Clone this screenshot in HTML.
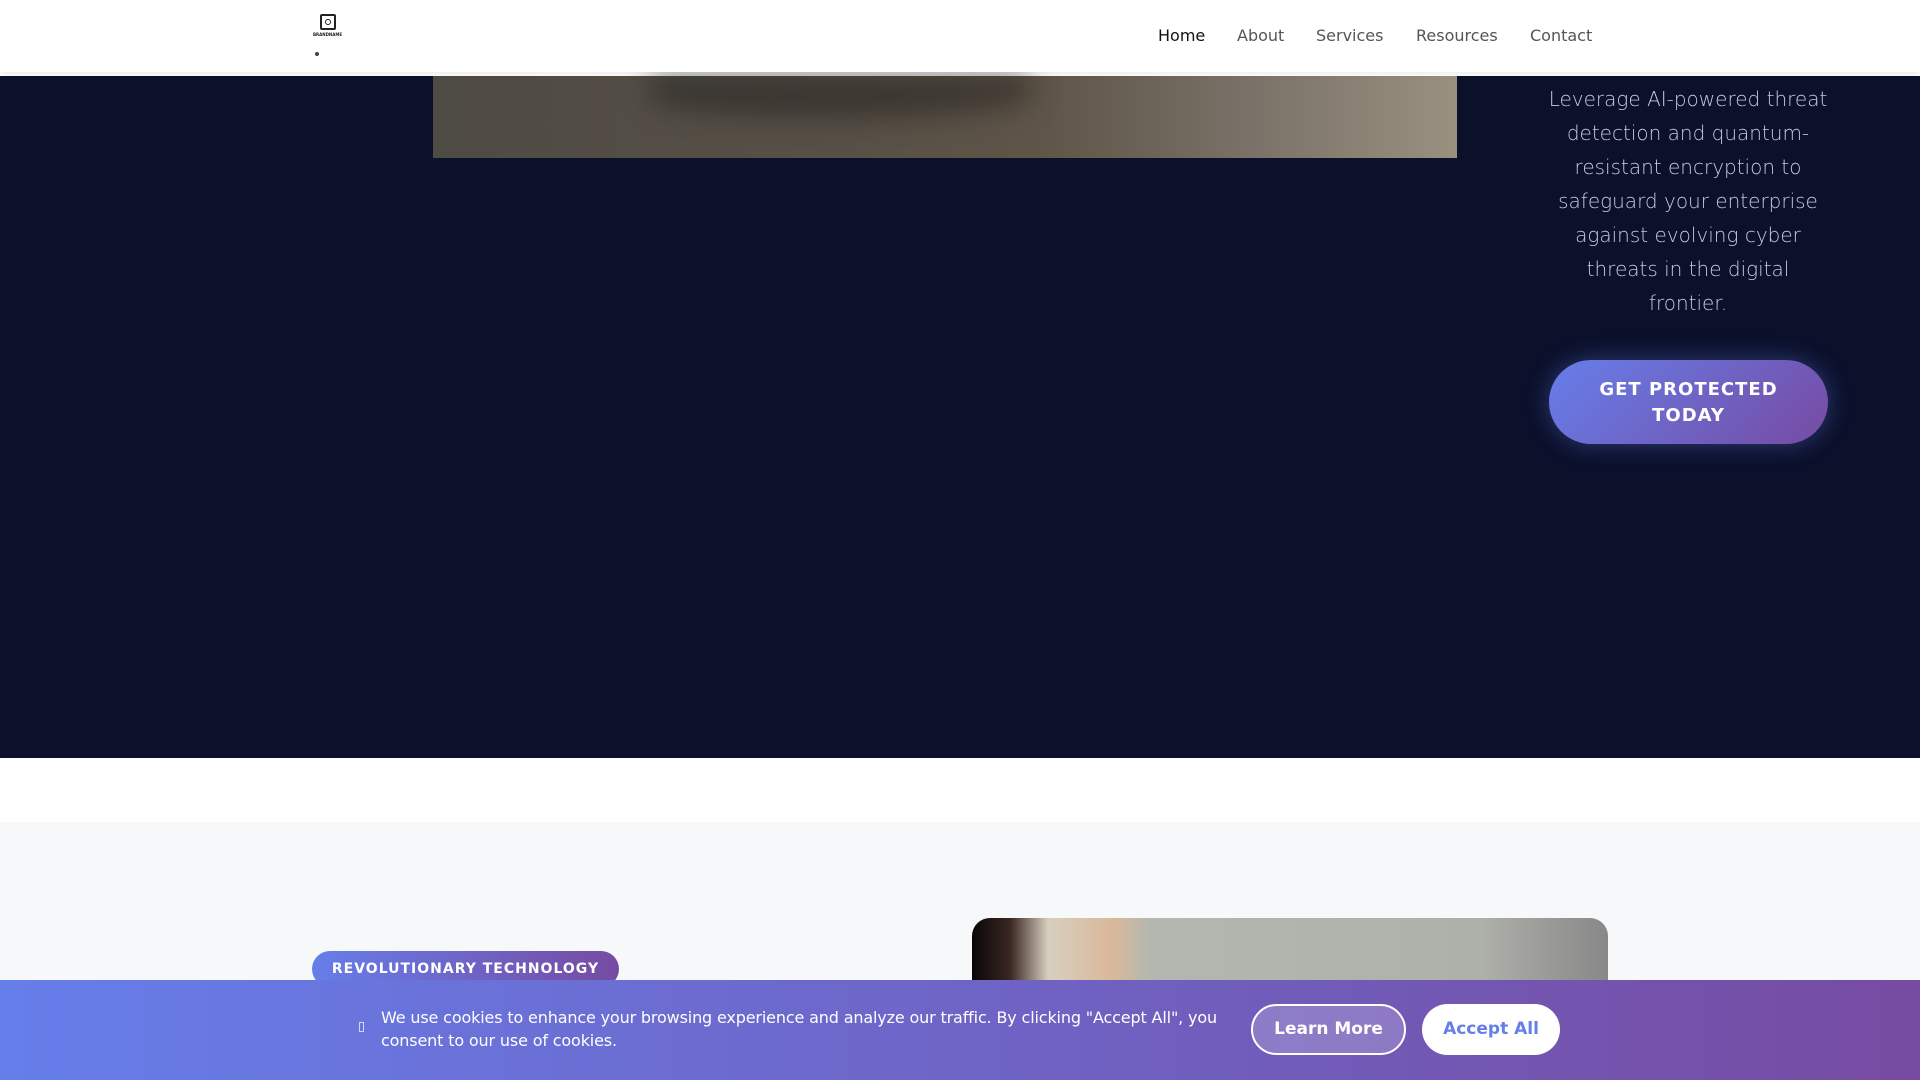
<!DOCTYPE html>
<html><head><meta charset="utf-8"><style>
*{margin:0;padding:0;box-sizing:border-box}
html,body{width:1920px;height:1080px;overflow:hidden}
body{font-family:"DejaVu Sans","Liberation Sans",sans-serif;background:#fff;position:relative}
.nav{position:absolute;top:0;left:0;width:1920px;height:72px;background:#fff;box-shadow:0 2px 6px rgba(0,0,0,.08);z-index:5}
.nav a{position:absolute;top:26px;font-size:16px;color:#555;text-decoration:none}
.dark{position:absolute;top:76px;left:0;width:1920px;height:682px;background:#0b102b}
.img1{position:absolute;left:433px;top:76px;width:1024px;height:82px;background:linear-gradient(90deg,#4e4a44 0%,#575046 40%,#5f5548 60%,#7a7268 80%,#9a9080 100%)}
.blob{position:absolute;left:650px;top:76px;width:380px;height:40px;border-radius:0 0 50% 50%;background:rgba(35,33,32,.6);filter:blur(14px)}
.txt{position:absolute;left:1548px;width:280px;top:82px;text-align:center;color:#c8cad8;font-size:20px;line-height:34px;font-weight:300}
.btn{position:absolute;left:1549px;top:360px;width:279px;height:84px;border-radius:42px;background:linear-gradient(135deg,#667eea,#764ba2);color:#fff;font-weight:bold;font-size:18px;letter-spacing:1px;text-align:center;line-height:26px;padding-top:17px;box-shadow:0 0 24px rgba(102,126,234,.4)}
.light{position:absolute;top:822px;left:0;width:1920px;height:258px;background:#f7f8fa}
.badge{position:absolute;left:312px;top:951px;width:307px;height:36px;border-radius:18px;background:linear-gradient(90deg,#667eea,#764ba2);color:#fff;font-weight:bold;font-size:14px;letter-spacing:1px;text-align:center;line-height:36px}
.img2{position:absolute;left:972px;top:918px;width:636px;height:162px;border-radius:18px 18px 0 0;overflow:hidden;background:linear-gradient(90deg,#0a0606 0%,#3a2622 6%,#d8cfc0 12%,#d9b89a 22%,#b4b7b0 28%,#aeb0aa 80%,#888 100%)}
.cookie{position:absolute;top:980px;left:0;width:1920px;height:100px;background:linear-gradient(90deg,#667eea,#764ba2);z-index:6}
.ct{position:absolute;left:381px;top:26px;color:#fff;font-size:16px;line-height:23px;width:860px;letter-spacing:-0.15px}
.lm{position:absolute;left:1251px;top:24px;width:155px;height:51px;border:2px solid #fff;border-radius:26px;background:rgba(255,255,255,.2);color:#fff;font-weight:bold;font-size:17px;text-align:center;line-height:47px}
.aa{position:absolute;left:1422px;top:24px;width:138px;height:51px;border-radius:26px;background:#fff;color:#667eea;font-weight:bold;font-size:17px;text-align:center;line-height:51px}
</style></head><body>
<div class="nav">
<div style="position:absolute;left:320px;top:14px;width:16px;height:16px;border:2px solid #222;border-radius:2px"><div style="margin:3px;width:6px;height:6px;border:1.5px solid #222;border-radius:50%"></div></div>
<div style="position:absolute;left:313px;top:32px;font-size:4px;color:#222;font-weight:bold">BRANDNAME</div>
<div style="position:absolute;left:315px;top:52px;width:4px;height:4px;border-radius:50%;background:#444"></div>
<a style="left:1158px;color:#111">Home</a><a style="left:1237px">About</a><a style="left:1316px">Services</a><a style="left:1416px">Resources</a><a style="left:1530px">Contact</a>
</div>
<div class="dark"></div>
<div class="img1"></div><div class="blob"></div>
<div class="txt">Leverage AI-powered threat detection and quantum-resistant encryption to safeguard your enterprise against evolving cyber threats in the digital frontier.</div>
<div class="btn">GET PROTECTED<br>TODAY</div>
<div class="light"></div>
<div class="badge">REVOLUTIONARY TECHNOLOGY</div>
<div class="img2"></div>
<div class="cookie">
<div style="position:absolute;left:359px;top:42px;width:5px;height:10px;border:1px solid #fff;opacity:.7"></div>
<div class="ct">We use cookies to enhance your browsing experience and analyze our traffic. By clicking "Accept All", you consent to our use of cookies.</div>
<div class="lm">Learn More</div><div class="aa">Accept All</div>
</div>
</body></html>
